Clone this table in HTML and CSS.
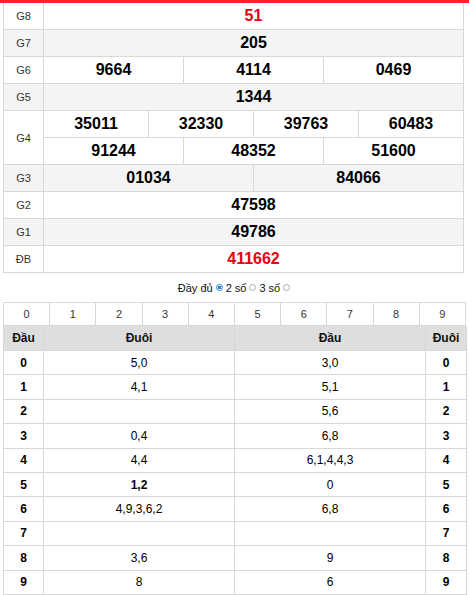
FILE: index.html
```html
<!DOCTYPE html>
<html lang="vi">
<head>
<meta charset="utf-8">
<link rel="stylesheet" href="styles.css">
</head>
<body>
<div class="bar"></div>
<div class="wrap">
  <table class="kq">
    <colgroup><col class="c-lab"><col span="12"></colgroup>
    <tr><td class="lab">G8</td><td colspan="12" class="num red">51</td></tr>
    <tr class="g"><td class="lab">G7</td><td colspan="12" class="num">205</td></tr>
    <tr><td class="lab">G6</td><td colspan="4" class="num">9664</td><td colspan="4" class="num">4114</td><td colspan="4" class="num">0469</td></tr>
    <tr class="g"><td class="lab">G5</td><td colspan="12" class="num">1344</td></tr>
    <tr><td class="lab" rowspan="2">G4</td><td colspan="3" class="num">35011</td><td colspan="3" class="num">32330</td><td colspan="3" class="num">39763</td><td colspan="3" class="num">60483</td></tr>
    <tr><td colspan="4" class="num">91244</td><td colspan="4" class="num">48352</td><td colspan="4" class="num">51600</td></tr>
    <tr class="g"><td class="lab">G3</td><td colspan="6" class="num">01034</td><td colspan="6" class="num">84066</td></tr>
    <tr><td class="lab">G2</td><td colspan="12" class="num">47598</td></tr>
    <tr class="g"><td class="lab">G1</td><td colspan="12" class="num">49786</td></tr>
    <tr><td class="lab">ĐB</td><td colspan="12" class="num red">411662</td></tr>
  </table>

  <div class="opts">
    <span>Đầy đủ</span><span class="radio on"></span>
    <span>2 số</span><span class="radio"></span>
    <span>3 số</span><span class="radio"></span>
  </div>

  <table class="digits">
    <tr><td>0</td><td>1</td><td>2</td><td>3</td><td>4</td><td>5</td><td>6</td><td>7</td><td>8</td><td>9</td></tr>
  </table>

  <table class="ld">
    <colgroup><col class="c1"><col class="c2"><col class="c3"><col class="c4"></colgroup>
    <tr class="hd"><th>Đầu</th><th>Đuôi</th><th>Đầu</th><th>Đuôi</th></tr>
    <tr><td class="b">0</td><td>5,0</td><td>3,0</td><td class="b">0</td></tr>
    <tr><td class="b">1</td><td>4,1</td><td>5,1</td><td class="b">1</td></tr>
    <tr><td class="b">2</td><td></td><td>5,6</td><td class="b">2</td></tr>
    <tr><td class="b">3</td><td>0,4</td><td>6,8</td><td class="b">3</td></tr>
    <tr><td class="b">4</td><td>4,4</td><td>6,1,4,4,3</td><td class="b">4</td></tr>
    <tr><td class="b">5</td><td class="b">1,2</td><td>0</td><td class="b">5</td></tr>
    <tr><td class="b">6</td><td>4,9,3,6,2</td><td>6,8</td><td class="b">6</td></tr>
    <tr><td class="b">7</td><td></td><td></td><td class="b">7</td></tr>
    <tr><td class="b">8</td><td>3,6</td><td>9</td><td class="b">8</td></tr>
    <tr><td class="b">9</td><td>8</td><td>6</td><td class="b">9</td></tr>
  </table>
</div>
</body>
</html>
```
FILE: styles.css
```css
html, body {
  margin: 0;
  padding: 0;
  background: #fff;
  font-family: "Liberation Sans", Arial, sans-serif;
  color: #222;
}
.bar {
  height: 3px;
  background: #f2262e;
}
.wrap {
  padding: 0 0 0 3px;
}
table {
  border-collapse: collapse;
  table-layout: fixed;
}
td, th {
  border: 1px solid #d8d8d8;
  padding: 0;
  text-align: center;
}
.kq {
  width: 461px;
  border-top-style: hidden;
}
.kq .c-lab { width: 40px; }
.kq td {
  height: 26px;
}
.kq .g td { background: #f4f4f4; }
.kq .lab {
  font-size: 11px;
  color: #333;
}
.kq .num {
  font-size: 16px;
  font-weight: bold;
  color: #000;
}
.kq .num.red { color: #e60012; }

.opts {
  height: 29px;
  display: flex;
  align-items: center;
  justify-content: center;
  gap: 2px;
  font-size: 11px;
  color: #111;
  padding-right: 3px;
}
.radio {
  width: 7px;
  height: 7px;
  border: 1px solid #aaa;
  border-radius: 50%;
  box-sizing: border-box;
  background: #fff;
  margin: 0 1px;
}
.radio.on {
  border-color: #2a86d9;
  background: radial-gradient(circle, #2a86d9 45%, #fff 55%);
}

.digits {
  width: 463px;
}
.digits td {
  height: 22px;
  font-size: 11px;
  color: #333;
}
.ld {
  width: 463px;
  border-top-style: hidden;
}
.ld .c1 { width: 40px; }
.ld .c2 { width: 191px; }
.ld .c3 { width: 191px; }
.ld .c4 { width: 41px; }
.ld th {
  background: #dedede;
  height: 24px;
  font-size: 12px;
  font-weight: bold;
  color: #111;
}
.ld td {
  height: 23.4px;
  font-size: 12px;
  color: #000;
}
.ld td.b { font-weight: bold; color: #000; }
```
